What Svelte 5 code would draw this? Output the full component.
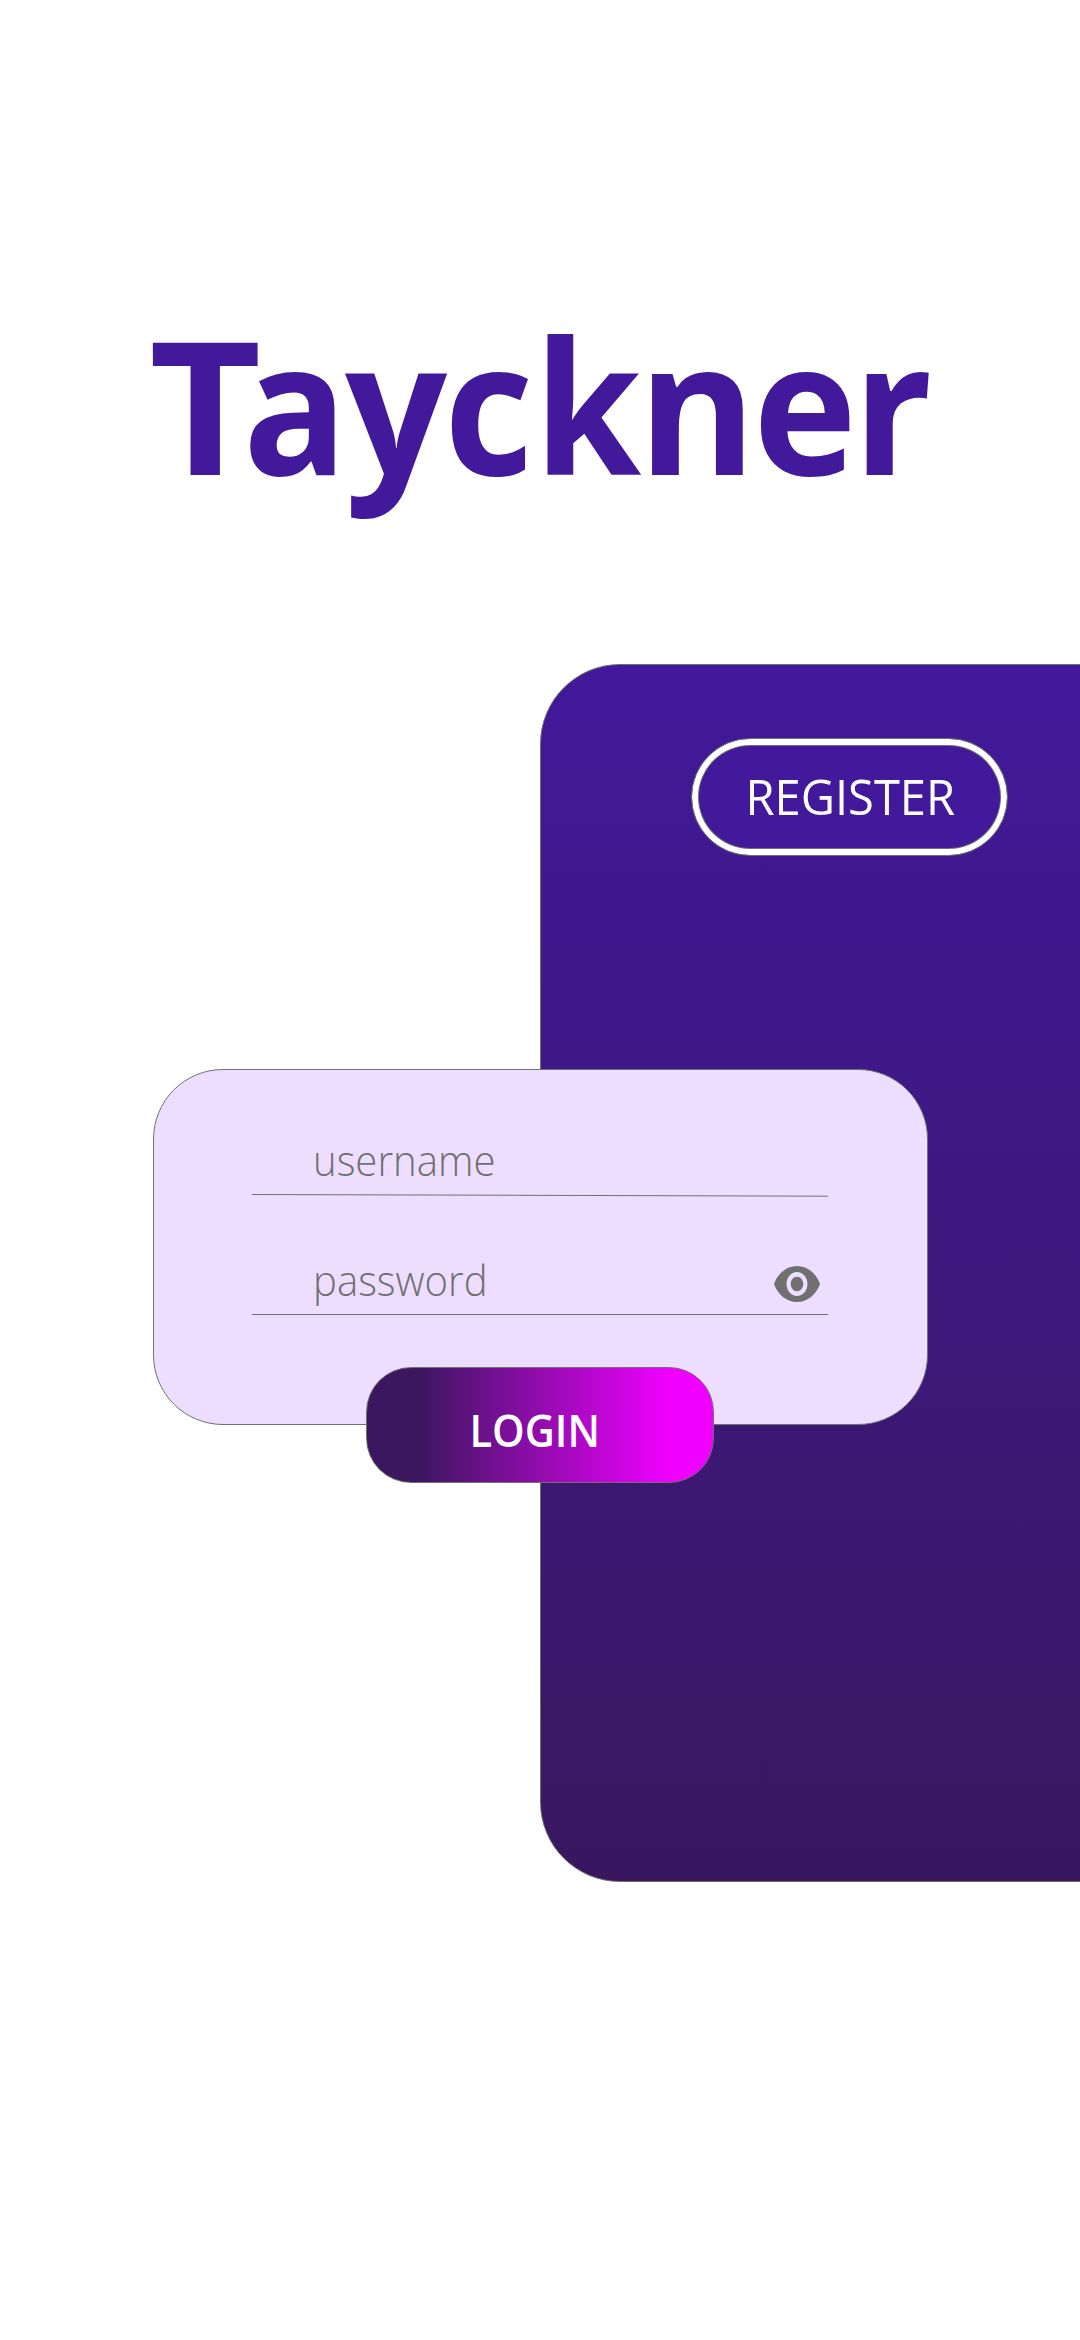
<script>
  const title = [...'Tayckner'];
</script>

<main>
  <h1 aria-label="Tayckner">{#each title as letter, i}<span class="l{i}">{letter}</span>{/each}</h1>

  <section class="panel">
    <button class="register"><span>REGISTER</span></button>
  </section>

  <form class="card">
    <div class="field">
      <span>username</span>
      <svg class="rule" viewBox="0 0 576 3" aria-hidden="true"><path d="M0 .5 576 2.2" /></svg>
    </div>
    <div class="field">
      <span>password</span>
      <svg class="eye" viewBox="1 4.5 22 15" preserveAspectRatio="none" aria-hidden="true">
        <path d="M12 4.5C7 4.5 2.73 7.61 1 12c1.73 4.39 6 7.5 11 7.5s9.27-3.11 11-7.5c-1.73-4.39-6-7.5-11-7.5zM12 17c-2.76 0-5-2.24-5-5s2.24-5 5-5 5 2.24 5 5-2.24 5-5 5zm0-8c-1.66 0-3 1.34-3 3s1.34 3 3 3 3-1.34 3-3-1.34-3-3-3z" />
      </svg>
      <svg class="rule" viewBox="0 0 576 3" aria-hidden="true"><path d="M0 .5H576" /></svg>
    </div>
  </form>

  <button class="login" type="button"><span>LOGIN</span></button>
</main>

<style>
  :global(body) {
    background: #fff;
  }

  main {
    display: grid;
    grid-template-columns: 153px 213px 174px 174px 214px 152px;
    grid-template-rows: 303px 361px 405px 298px 58px 58px 399px 458px;
    width: 1080px;
    height: 2340px;
    overflow: hidden;
    font-family: 'Open Sans', 'Noto Sans', sans-serif;
  }

  h1 {
    grid-area: 2 / 1 / 3 / 7;
    display: flex;
    margin: 0;
    padding-left: 148.6px;
    color: #41199a;
    font-size: 185px;
    font-weight: 700;
    line-height: 200px;
  }

  h1 span {
    flex: none;
    transform-origin: 0 0;
  }

  .l0 { width: 88px; margin-right: 6.9px; transform: scaleX(1.05); }
  .l1 { width: 101.5px; transform: scaleX(0.935); }
  .l2 { width: 99px; transform: scaleX(0.971); }
  .l3 { width: 90px; transform: scaleX(0.94); }
  .l4 { width: 104px; transform: scaleX(0.935); }
  .l5 { width: 115.5px; transform: scaleX(0.973); }
  .l6 { width: 99.5px; transform: scaleX(0.95); }
  .l7 { width: 80px; transform: scaleX(0.945); }

  .panel {
    grid-area: 3 / 4 / 8 / 7;
    display: flex;
    align-items: flex-start;
    box-sizing: border-box;
    margin-right: -2px;
    padding: 73px 0 0 150px;
    border: 1px solid #707070;
    border-radius: 80px 0 0 80px;
    background: linear-gradient(#41199a, #39175f);
  }

  button {
    display: flex;
    align-items: center;
    justify-content: center;
    box-sizing: border-box;
    padding: 0;
    color: #fff;
    font-family: inherit;
    white-space: nowrap;
  }

  .register {
    width: 317px;
    height: 118px;
    padding: 0 0 2px 2px;
    border: 1px solid #707070;
    border-radius: 59px;
    background: #41199a;
    box-shadow: inset 0 0 0 6px #fff, inset 0 0 0 7px #707070;
    font-size: 50px;
    line-height: 60px;
  }

  .register span {
    transform: scaleX(0.941);
  }

  .card {
    grid-area: 4 / 2 / 6 / 6;
    display: flex;
    flex-direction: column;
    gap: 54px;
    box-sizing: border-box;
    padding: 59px 98px 0;
    border: 1px solid #707070;
    border-radius: 70px;
    background: #eddeff;
  }

  .field {
    display: grid;
    grid-template-columns: 60.5px 1fr 46px 9px;
    grid-template-rows: 65px 3px;
    height: 66px;
    color: #707070;
    font-size: 43px;
    font-weight: 300;
    line-height: 60px;
  }

  .field span {
    grid-area: 1 / 2;
    padding-top: 1px;
    transform: scaleX(0.933);
    transform-origin: 0 0;
  }

  .rule {
    grid-area: 2 / 1 / 3 / 5;
    width: 576px;
    height: 3px;
    fill: none;
    stroke: #707070;
  }

  .eye {
    grid-area: 1 / 3;
    width: 46px;
    height: 36px;
    margin-top: 17px;
    fill: #707070;
  }

  .login {
    grid-area: 5 / 3 / 7 / 5;
    padding: 8px 10px 0 0;
    border: 1px solid #707070;
    border-radius: 45px;
    background: linear-gradient(90deg, #3a175f 14.5%, #f000ff 87.5%);
    font-size: 45px;
    font-weight: 600;
  }

  .login span {
    transform: scaleX(0.922);
  }
</style>
